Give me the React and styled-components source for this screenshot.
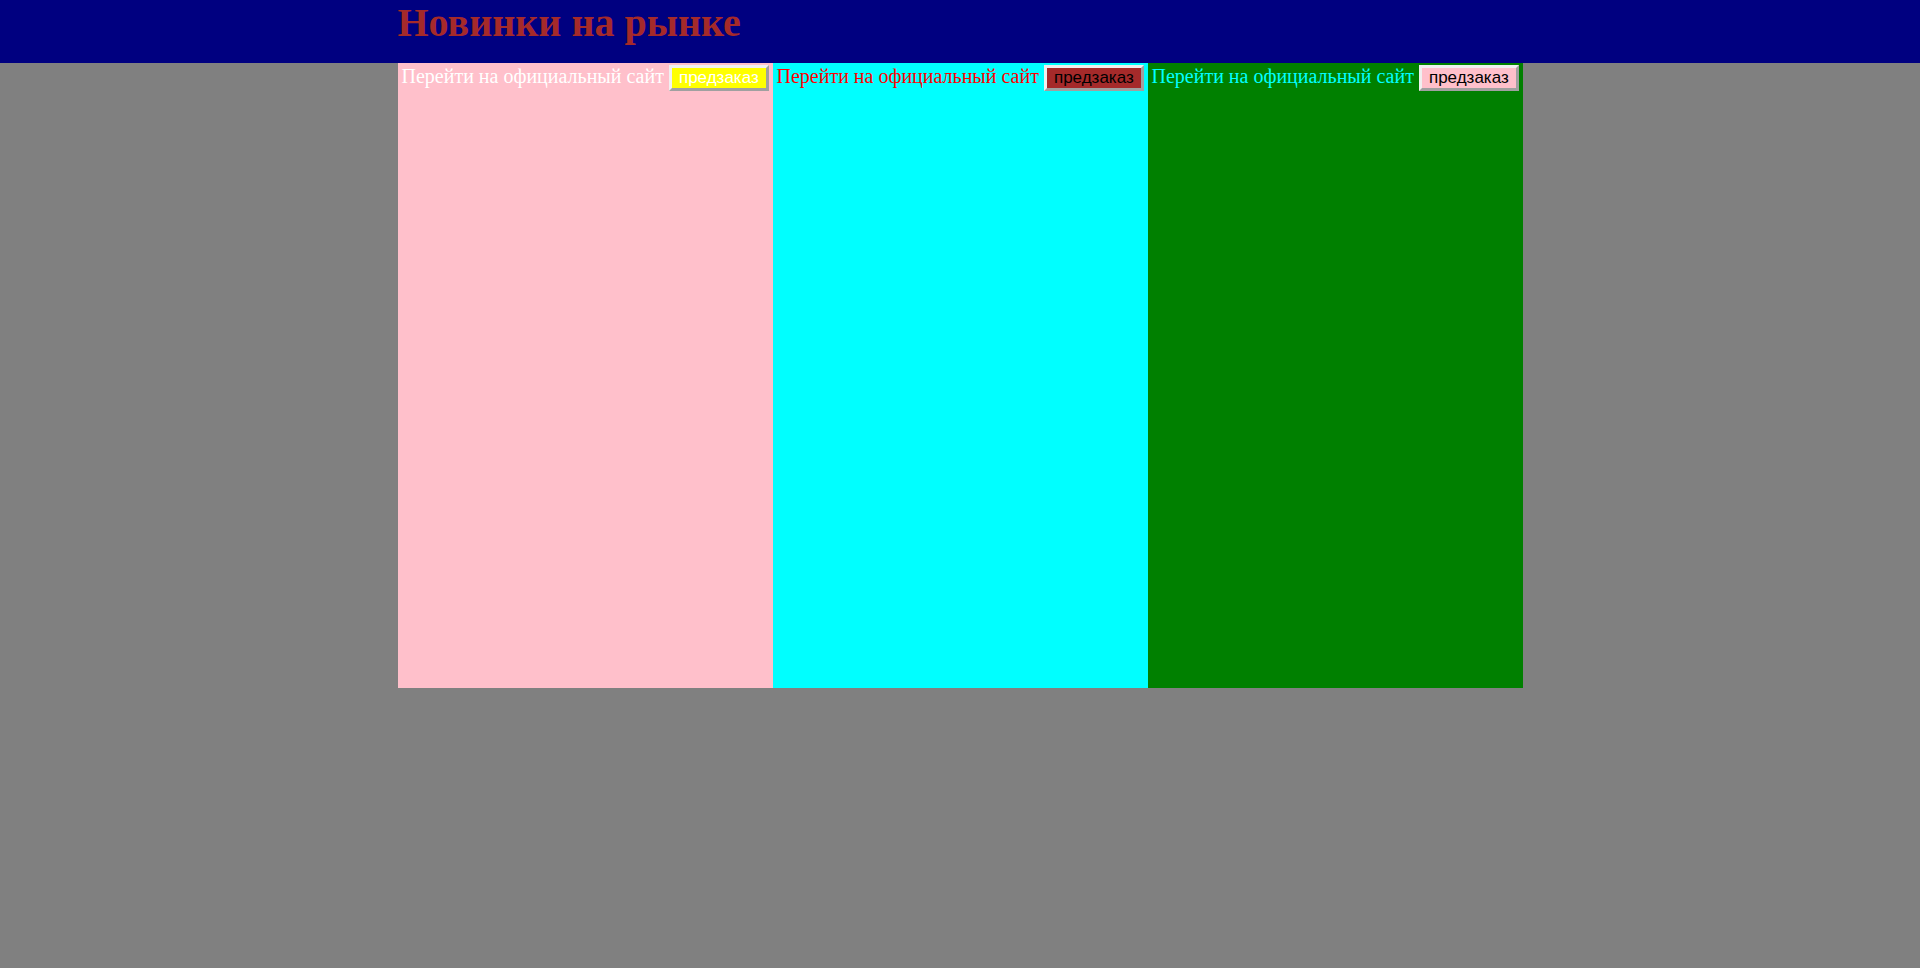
import styled, { createGlobalStyle } from "styled-components";

const GlobalStyle = createGlobalStyle`
  html, body {
    margin: 0;
    padding: 0;
    background: gray;
  }
  body {
    font-family: "Liberation Serif", "Times New Roman", serif;
  }
`;

const Header = styled.header`
  height: 63px;
  background-color: navy;
`;

const Container = styled.div`
  width: 1125px;
  margin: 0 auto;
`;

const Title = styled.h1`
  margin: 0;
  font-size: 40px;
  line-height: 46px;
  font-weight: bold;
  color: brown;
`;

const Columns = styled.section`
  display: grid;
  grid-template-columns: repeat(3, minmax(0, 1fr));
  height: 625px;
`;

const Column = styled.div`
  background-color: ${({ bg }) => bg};
  padding: 1px 4px;
  min-width: 0;
`;

const Row = styled.div`
  display: flex;
  align-items: baseline;
  gap: 5px;
`;

const LinkText = styled.span`
  font-size: 20px;
  line-height: 24px;
  color: ${({ color }) => color};
  white-space: nowrap;
`;

const Button = styled.button`
  flex-shrink: 0;
  font-family: "Liberation Sans", Arial, sans-serif;
  font-size: 17px;
  line-height: 18px;
  padding: 1px 7px;
  background-color: ${({ bg }) => bg};
  color: ${({ fg }) => fg};
  border-style: solid;
  border-width: 3px;
  border-color: #f0f0f0 #a0a0a0 #a0a0a0 #f0f0f0;
`;

const cards = [
  { bg: "pink", text: "white", btnBg: "yellow", btnFg: "white" },
  { bg: "cyan", text: "red", btnBg: "brown", btnFg: "black" },
  { bg: "green", text: "cyan", btnBg: "pink", btnFg: "black" },
];

const App = () => {
  return (
    <>
      <GlobalStyle />
      <Header>
        <Container>
          <Title>Новинки на рынке</Title>
        </Container>
      </Header>
      <Container>
        <Columns>
          {cards.map((c, i) => (
            <Column key={i} bg={c.bg}>
              <Row>
                <LinkText color={c.text}>Перейти на официальный сайт</LinkText>
                <Button bg={c.btnBg} fg={c.btnFg}>
                  предзаказ
                </Button>
              </Row>
            </Column>
          ))}
        </Columns>
      </Container>
    </>
  );
};

export default App;
